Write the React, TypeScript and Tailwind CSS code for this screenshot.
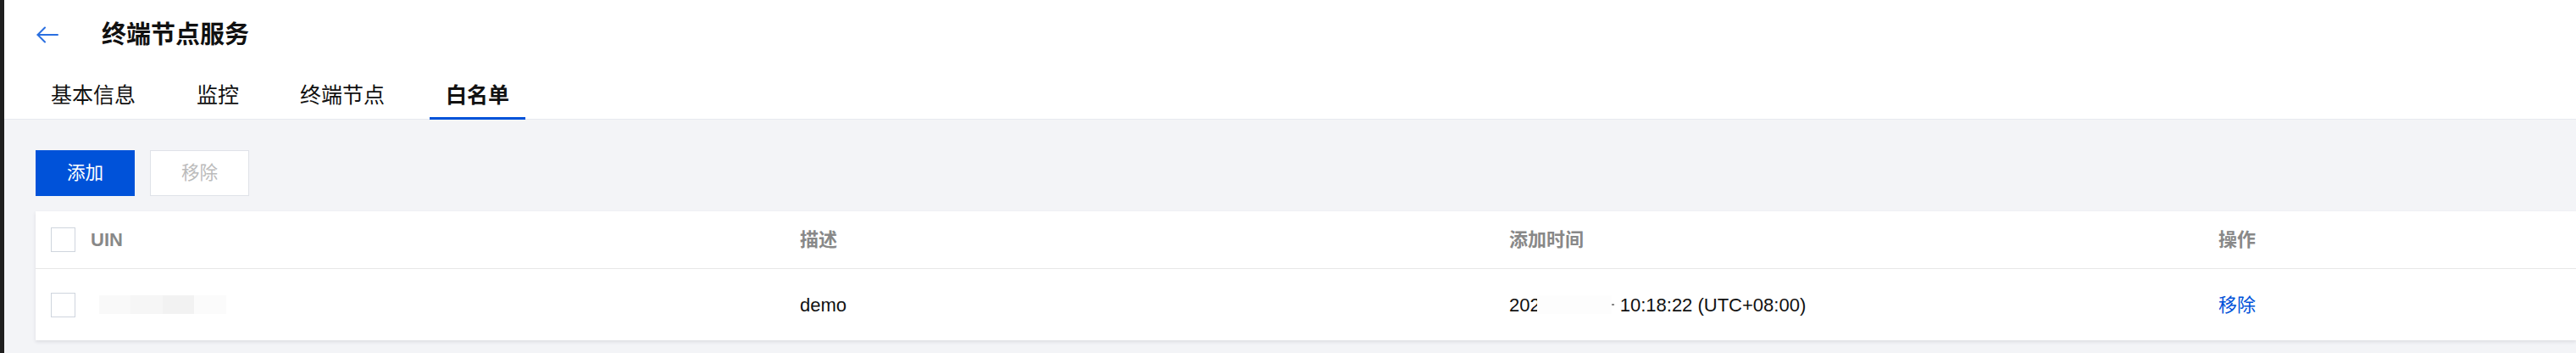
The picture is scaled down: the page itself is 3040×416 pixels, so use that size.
import React from "react";

const FONT = {
  fontFamily: '"Liberation Sans", "Noto Sans CJK SC", sans-serif',
};

function Checkbox() {
  return <div className="h-[29px] w-[29px] shrink-0 border border-[#cfd5de] bg-white" />;
}

export default function App() {
  const tabs = ["基本信息", "监控", "终端节点", "白名单"];
  return (
    <div
      className="flex h-[416px] w-[3040px] overflow-hidden bg-[#f3f4f7] text-black"
      style={FONT}
    >
      <div className="w-[5px] shrink-0 bg-[#1f1f1f]" />
      <div className="flex min-w-0 flex-1 flex-col">
        {/* Header */}
        <div className="border-b border-[#e7eaef] bg-white pl-[36px]">
          <div className="flex h-[82px] items-center">
            <svg
              className="ml-[2px] h-[20px] w-[26px] text-[#2a6fe0]"
              viewBox="0 0 26 20"
              fill="none"
              stroke="currentColor"
              strokeWidth="2"
              strokeLinecap="round"
              strokeLinejoin="round"
            >
              <path d="M1.5 10H25" />
              <path d="M10 1.5L1.5 10L10 18.5" />
            </svg>
            <div className="ml-[51px] text-[29px] font-bold leading-none text-[#111]">
              终端节点服务
            </div>
          </div>
          <div className="flex h-[58px] gap-[34px]">
            {tabs.map((t, i) => (
              <div
                key={t}
                className={
                  i === 3
                    ? "relative flex items-center px-[19px] pt-[2px] text-[25px] font-semibold leading-none text-[#111]"
                    : "relative flex items-center px-[19px] pt-[2px] text-[25px] leading-none text-[#111]"
                }
              >
                {t}
                {i === 3 && (
                  <div className="absolute bottom-[-1px] left-0 right-0 h-[3px] bg-[#0052d9]" />
                )}
              </div>
            ))}
          </div>
        </div>

        {/* Body */}
        <div className="pl-[37px] pt-[36px]">
          <div className="flex gap-[18px]">
            <div className="flex h-[54px] w-[117px] items-center justify-center bg-[#0052d9] text-[21.6px] text-white">
              添加
            </div>
            <div className="flex h-[54px] w-[117px] items-center justify-center border border-[#dfe2e8] bg-white text-[21.6px] text-[#bbbbbb]">
              移除
            </div>
          </div>

          <div className="mt-[18px] bg-white shadow-[0_2px_4px_rgba(54,58,80,0.12)]">
            {/* header row */}
            <div className="flex h-[68px] items-center border-b border-[#e7e7e7] text-[22px] text-[#888888]">
              <div className="flex w-[45px] shrink-0 pl-[18px]">
                <Checkbox />
              </div>
              <div className="w-[837px] shrink-0 pl-[20px] font-bold">UIN</div>
              <div className="w-[837px] shrink-0 pl-[20px] font-semibold">描述</div>
              <div className="w-[837px] shrink-0 pl-[20px] font-semibold">添加时间</div>
              <div className="flex-1 pl-[20px] font-semibold">操作</div>
            </div>
            {/* body row */}
            <div className="flex h-[84px] items-center text-[22px] text-[#111]">
              <div className="flex w-[45px] shrink-0 pl-[18px]">
                <Checkbox />
              </div>
              <div className="flex w-[837px] shrink-0 pl-[30px]">
                <div className="h-[22px] w-[37px] bg-[#f9f9f9]" />
                <div className="h-[22px] w-[38px] bg-[#f6f6f6]" />
                <div className="h-[22px] w-[37px] bg-[#f2f2f2]" />
                <div className="h-[22px] w-[38px] bg-[#fbfbfb]" />
              </div>
              <div className="w-[837px] shrink-0 pl-[20px]">demo</div>
              <div className="flex w-[837px] shrink-0 items-center pl-[20px]">
                <span>202</span>
                <span className="ml-[-4px] inline-block h-[22px] w-[88px] bg-[#fdfdfd]" />
                <span className="inline-block h-[2px] w-[3px] bg-[#888]" />
                <span className="ml-[7px]">10:18:22 (UTC+08:00)</span>
              </div>
              <div className="flex-1 pl-[20px] text-[#0052d9]">移除</div>
            </div>
          </div>
        </div>
      </div>
    </div>
  );
}
